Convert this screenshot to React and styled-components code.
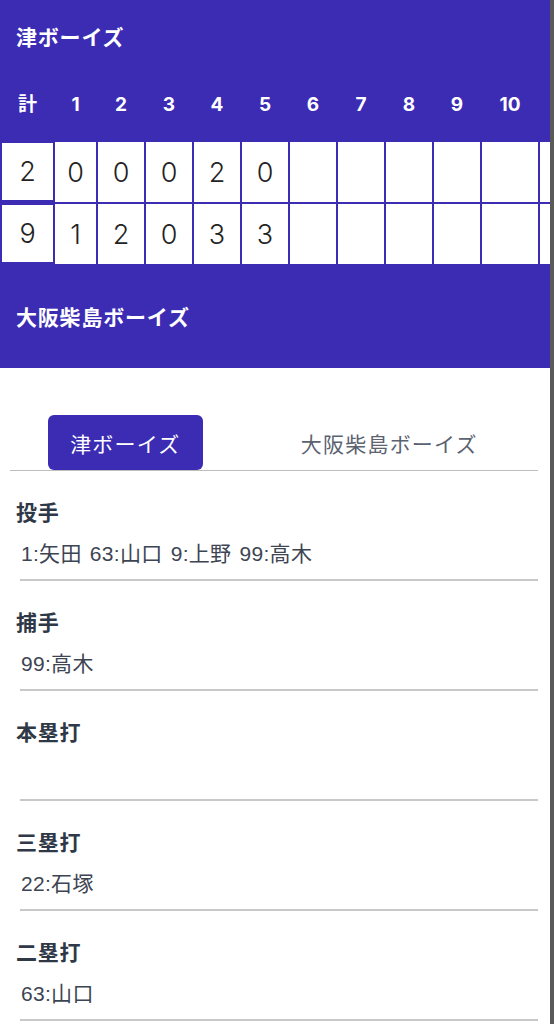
import React from 'react';
import styled, { createGlobalStyle } from 'styled-components';

const BLUE = '#3c2cb4';

const GlobalStyle = createGlobalStyle`
  html, body {
    margin: 0;
    padding: 0;
    background: #5a5a5a;
  }
  body {
    font-family: "Noto Sans", "Noto Sans CJK JP", sans-serif;
  }
`

const innings = ['1', '2', '3', '4', '5', '6', '7', '8', '9', '10', '11'];

const teams = [
  { name: '津ボーイズ', total: 2, scores: [0, 0, 0, 2, 0] },
  { name: '大阪柴島ボーイズ', total: 9, scores: [1, 2, 0, 3, 3] },
];

const sections = [
  { title: '投手', value: '1:矢田 63:山口 9:上野 99:高木' },
  { title: '捕手', value: '99:高木' },
  { title: '本塁打', value: '' },
  { title: '三塁打', value: '22:石塚' },
  { title: '二塁打', value: '63:山口' },
];

export default () => {
  return (
    <Page>
      <GlobalStyle />
      <Board>
        <TopTitle>{teams[0].name}</TopTitle>
        <InningHeader>
          <HeadLabel>計</HeadLabel>
          {innings.map(n => <HeadLabel key={n}>{n === '11' ? '' : n}</HeadLabel>)}
        </InningHeader>
        <ScoreGrid>
          {teams.map(team => (
            <React.Fragment key={team.name}>
              <TotalCell>{team.total}</TotalCell>
              {innings.map((n, i) => (
                <ScoreCell key={n}>{team.scores[i] ?? ''}</ScoreCell>
              ))}
            </React.Fragment>
          ))}
        </ScoreGrid>
        <BottomTitle>{teams[1].name}</BottomTitle>
      </Board>

      <Tabs>
        <Tab active>{teams[0].name}</Tab>
        <Tab>{teams[1].name}</Tab>
      </Tabs>

      {sections.map(s => (
        <Section key={s.title}>
          <SectionTitle>{s.title}</SectionTitle>
          <SectionValue>{s.value}</SectionValue>
        </Section>
      ))}
    </Page>
  )
}

const Page = styled.div`
  width: 550px;
  min-height: 100vh;
  background: #fff;
  overflow: hidden;
`
const Board = styled.div`
  background: ${BLUE};
  color: #fff;
  overflow: hidden;
`
const TopTitle = styled.div`
  height: 72px;
  display: flex;
  align-items: center;
  padding-left: 16px;
  font-size: 21px;
  font-weight: 700;
  letter-spacing: 0.8px;
`
const columns = `51px 41px repeat(8, 46px) 56px 46px`;

const InningHeader = styled.div`
  display: grid;
  grid-template-columns: ${columns};
  column-gap: 2px;
  padding: 20px 0 0 2px;
  height: 26px;
  margin-bottom: 24px;
`
const HeadLabel = styled.div`
  text-align: center;
  line-height: 26px;
  font-family: Inter, "Noto Sans CJK JP", sans-serif;
  font-size: 19px;
  font-weight: 700;
`
const ScoreGrid = styled.div`
  display: grid;
  grid-template-columns: ${columns};
  grid-auto-rows: 60px;
  gap: 2px;
  padding-left: 2px;
  width: 640px;
`
const ScoreCell = styled.div`
  background: #fff;
  color: #232323;
  display: flex;
  align-items: center;
  justify-content: center;
  font-family: Inter, sans-serif;
  font-size: 27px;
  font-weight: 300;
`
const TotalCell = styled(ScoreCell)`
  margin: 1px 0 2px;
`
const BottomTitle = styled(TopTitle)`
  height: 104px;
`
const Tabs = styled.div`
  display: flex;
  justify-content: space-around;
  margin: 47px 12px 0 10px;
  border-bottom: 1.5px solid #bdbdbd;
`
const Tab = styled.div`
  height: 55px;
  padding: 0 22px;
  display: flex;
  align-items: center;
  border-radius: 6px;
  font-size: 21px;
  letter-spacing: 1.2px;
  background: ${p => (p.active ? BLUE : 'transparent')};
  color: ${p => (p.active ? '#fff' : '#5b6270')};
`
const Section = styled.div`
  padding-top: 28px;
`
const SectionTitle = styled.div`
  padding-left: 16px;
  line-height: 26px;
  font-size: 21px;
  font-weight: 700;
  letter-spacing: 0.8px;
  color: #2f3846;
`
const SectionValue = styled.div`
  margin: 16px 12px 0 20px;
  padding-left: 1px;
  height: 26px;
  line-height: 26px;
  padding-bottom: 12px;
  border-bottom: 2px solid #c8c8c8;
  font-family: "Liberation Sans", "Noto Sans CJK JP", sans-serif;
  font-size: 21px;
  letter-spacing: 0.3px;
  word-spacing: 2px;
  color: #3d4452;
`
